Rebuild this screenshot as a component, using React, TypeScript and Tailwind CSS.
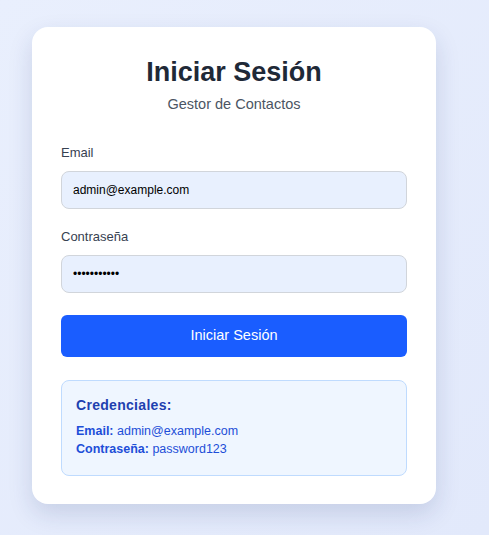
import React, { useState } from 'react';

export default function App() {
    const [email, setEmail] = useState('admin@example.com');
    const [password, setPassword] = useState('password123');

    return (
        <div className="min-h-[535px] bg-gradient-to-br from-[#e9effd] to-[#e2e9fb] pt-[27px] pl-[32px] font-['Liberation_Sans',Arial,sans-serif]">
            <div className="w-[404px] bg-white rounded-2xl shadow-[0_10px_25px_rgba(30,50,110,0.15)] px-[29px] pt-[29px] pb-[28px]">
                {/* Header */}
                <h1 className="text-center text-[27px] leading-8 font-bold text-[#1f2937]">Iniciar Sesión</h1>
                <p className="mt-[6px] text-center text-[14.5px] leading-5 text-[#4b5563]">Gestor de Contactos</p>

                {/* Email */}
                <label className="block mt-[30px] text-[13px] leading-[18px] text-[#374151]">Email</label>
                <input
                    type="email"
                    value={email}
                    onChange={(e) => setEmail(e.target.value)}
                    className="mt-[9px] block w-full h-[38px] px-[11px] rounded-lg border border-[#d1d5db] bg-[#e8f0fe] text-[12px] text-black outline-none"
                />

                {/* Password */}
                <label className="block mt-[19px] text-[13px] leading-[18px] text-[#374151]">Contraseña</label>
                <input
                    type="password"
                    value={password}
                    onChange={(e) => setPassword(e.target.value)}
                    className="mt-[9px] block w-full h-[38px] px-[11px] rounded-lg border border-[#d1d5db] bg-[#e8f0fe] text-[12px] text-black outline-none"
                />

                <button className="mt-[22px] w-full h-[42px] rounded-md bg-[#1a5dff] text-white text-[14.5px]">
                    Iniciar Sesión
                </button>

                {/* Demo credentials */}
                <div className="mt-[23px] rounded-lg border border-[#bfdbfe] bg-[#eff6ff] px-[14px] pt-[14px] pb-[17px]">
                    <p className="text-[14px] leading-5 font-bold tracking-[0.3px] text-[#1e40af]">Credenciales:</p>
                    <p className="mt-[7px] text-[12.5px] leading-[18px] text-[#1d4ed8]">
                        <span className="font-bold">Email:</span> admin@example.com
                    </p>
                    <p className="text-[12.5px] leading-[18px] text-[#1d4ed8]">
                        <span className="font-bold">Contraseña:</span> password123
                    </p>
                </div>
            </div>
        </div>
    );
}
